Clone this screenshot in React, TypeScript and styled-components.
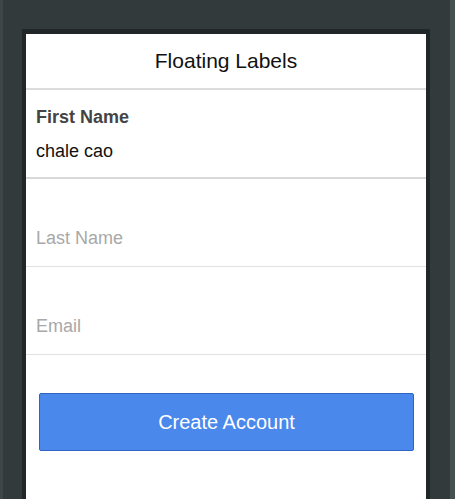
import React from "react";
import styled, { createGlobalStyle } from "styled-components";

const Global = createGlobalStyle`
  html, body { margin: 0; padding: 0; background: #323a3b; }
  body { font-family: "Liberation Sans", Arial, sans-serif; }
  * { box-sizing: border-box; }
`;

const Screen = styled.div`
  height: 499px;
  overflow: hidden;
  background: #323a3b;
  border-left: 3px solid #3d4748;
  border-right: 5px solid #455051;
  padding-top: 29px;
  padding-left: 19px;
`;

const Card = styled.div`
  width: 408px;
  min-height: 480px;
  background: #fff;
  border: 4px solid #212628;
  border-top-width: 5px;
  border-bottom: none;
  display: flex;
  flex-direction: column;
`;

const Header = styled.header`
  height: 56px;
  display: flex;
  align-items: center;
  justify-content: center;
  border-bottom: 2px solid #dcdcdc;
  font-size: 21px;
  line-height: 24px;
  color: #111;
`;

const Field = styled.label<{ $active?: boolean }>`
  display: flex;
  flex-direction: column;
  padding: 16px 10px ${(p) => (p.$active ? "15px" : "17px")};
  border-bottom: ${(p) => (p.$active ? "2px solid #d8d8d8" : "1px solid #e2e2e2")};
  gap: ${(p) => (p.$active ? "12px" : "10px")};
`;

const FloatLabel = styled.span<{ $active?: boolean }>`
  font-size: 18px;
  line-height: 22px;
  font-weight: bold;
  color: #444;
  opacity: ${(p) => (p.$active ? 1 : 0)};
`;

const Input = styled.input`
  border: none;
  outline: none;
  padding: 0;
  margin: 0;
  font-family: "Liberation Sans", Arial, sans-serif;
  font-size: 18px;
  line-height: 22px;
  height: 22px;
  color: #111;
  background: transparent;
  &::placeholder { color: #a8a8a8; }
`;

const Actions = styled.div`
  padding: 38px 12px 0 13px;
`;

const Button = styled.button`
  width: 100%;
  height: 58px;
  background: #4a88eb;
  border: 1px solid #2f64c2;
  border-radius: 2px;
  color: #fff;
  font-family: "Liberation Sans", Arial, sans-serif;
  font-size: 20px;
  padding: 0;
`;

export default function App() {
  return (
    <>
      <Global />
      <Screen>
        <Card>
          <Header>Floating Labels</Header>
          <Field $active>
            <FloatLabel $active>First Name</FloatLabel>
            <Input defaultValue="chale cao" />
          </Field>
          <Field>
            <FloatLabel>Last Name</FloatLabel>
            <Input placeholder="Last Name" />
          </Field>
          <Field>
            <FloatLabel>Email</FloatLabel>
            <Input placeholder="Email" />
          </Field>
          <Actions>
            <Button>Create Account</Button>
          </Actions>
        </Card>
      </Screen>
    </>
  );
}
